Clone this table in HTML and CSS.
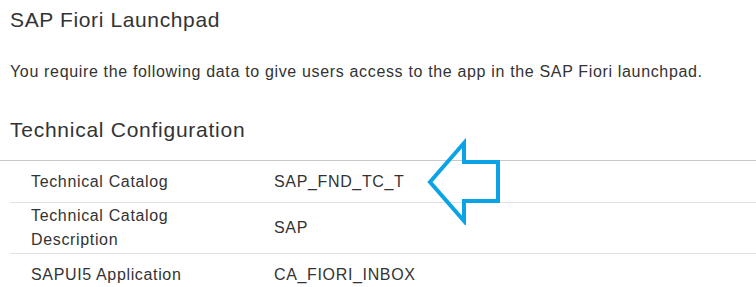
FILE: index.html
```html
<!DOCTYPE html>
<html>
<head>
<meta charset="utf-8">
<link rel="stylesheet" href="styles.css">
</head>
<body>
<div class="page">
  <h1 class="title">SAP Fiori Launchpad</h1>
  <p class="intro">You require the following data to give users access to the app in the SAP Fiori launchpad.</p>
  <h2 class="section">Technical Configuration</h2>
  <div class="table">
    <div class="row">
      <div class="key">Technical Catalog</div>
      <div class="val">SAP_FND_TC_T</div>
    </div>
    <div class="row">
      <div class="key">Technical Catalog<br>Description</div>
      <div class="val">SAP</div>
    </div>
    <div class="row">
      <div class="key">SAPUI5 Application</div>
      <div class="val">CA_FIORI_INBOX</div>
    </div>
  </div>
  <svg class="arrow" width="80" height="90" viewBox="0 0 80 90">
    <path d="M10 47 L44 8 L44 27 L78 27 L78 66 L44 66 L44 86 Z" fill="none" stroke="#0aa4e6" stroke-width="4" stroke-linejoin="miter"/>
  </svg>
</div>
</body>
</html>
```
FILE: styles.css
```css
html, body {
  margin: 0;
  padding: 0;
  background: #ffffff;
}
.page {
  position: relative;
  font-family: "Liberation Sans", Arial, sans-serif;
  color: #333333;
  width: 756px;
  height: 287px;
  overflow: hidden;
}
.title {
  margin: 0;
  padding: 8px 0 0 10px;
  font-size: 21px;
  font-weight: normal;
  line-height: 24px;
  letter-spacing: 0.63px;
}
.intro {
  margin: 0;
  padding: 28px 0 0 10px;
  font-size: 16px;
  line-height: 24px;
  letter-spacing: 0.66px;
}
.section {
  margin: 0;
  padding: 34px 0 0 10px;
  font-size: 21px;
  font-weight: normal;
  line-height: 24px;
  letter-spacing: 0.74px;
}
.table {
  margin-top: 18px;
  border-top: 1px solid #c8c8c8;
}
.row {
  display: flex;
  align-items: center;
  min-height: 42px;
  padding: 1px 0 1px;
  margin-left: 10px;
  border-bottom: 1px solid #e2e2e2;
  font-size: 16px;
  line-height: 24px;
  letter-spacing: 0.65px;
  box-sizing: border-box;
}
.key {
  width: 243px;
  padding-left: 21px;
  flex: none;
}
.val {
  flex: 1;
}
.arrow {
  position: absolute;
  left: 420px;
  top: 135px;
}
```
